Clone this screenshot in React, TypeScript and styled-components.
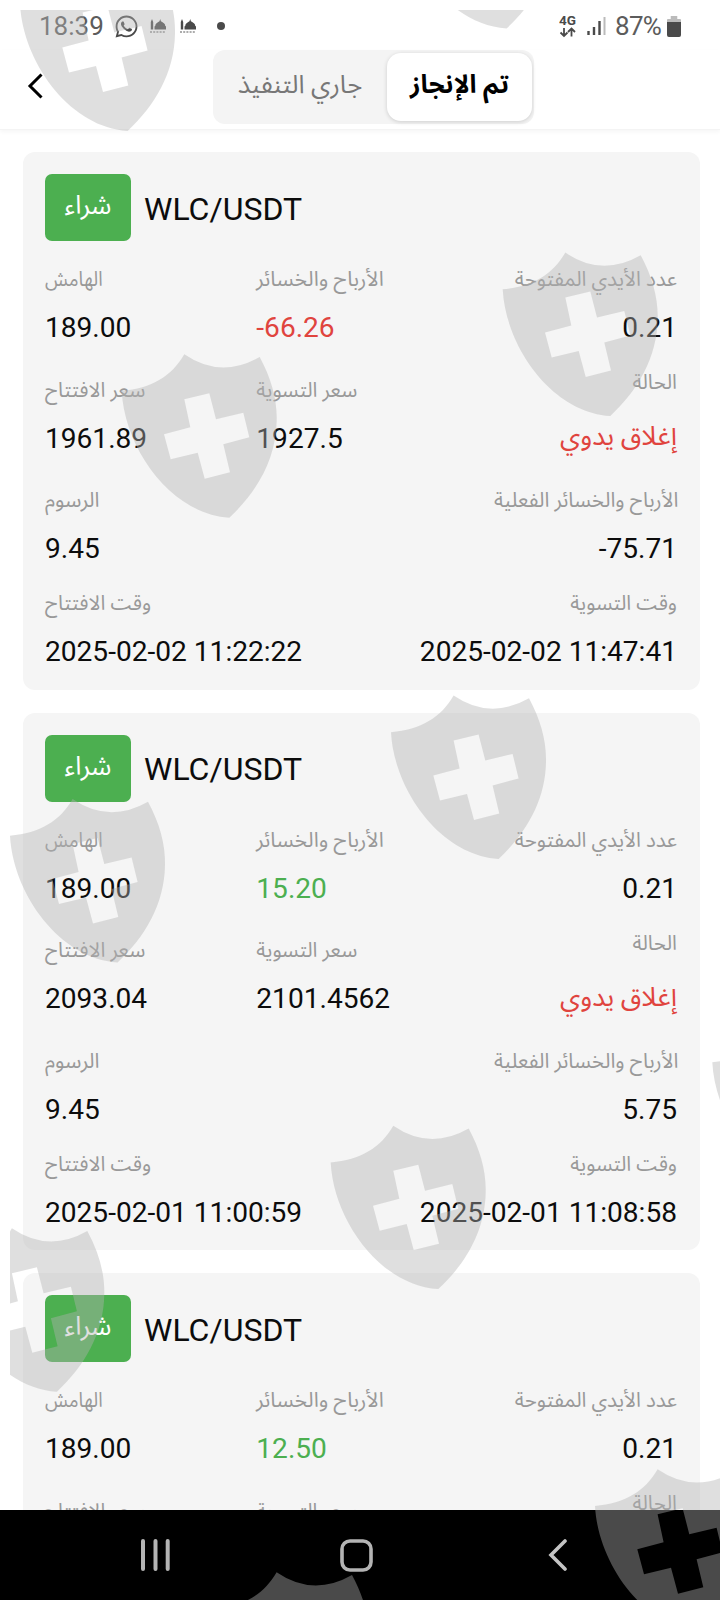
import React from 'react';
import styled, { createGlobalStyle } from 'styled-components';
import { FaWhatsapp } from 'react-icons/fa';

const GlobalStyle = createGlobalStyle`
  * { box-sizing: border-box; }
  body {
    margin: 0;
    background: #fff;
    font-family: Roboto, "Noto Sans Arabic", "Noto Sans", "DejaVu Sans", sans-serif;
    color: #0c0c0c;
  }
`

const Screen = styled.div`
  position: relative;
  width: 720px;
  height: 1600px;
  display: flex;
  flex-direction: column;
  overflow: hidden;
`

const StatusBar = styled.div`
  height: 50px;
  flex: none;
  display: flex;
  justify-content: space-between;
  padding: 2px 39px 0 39px;
  color: #4a4a4a;
  font-size: 26px;
`

const StatusGroup = styled.div`
  display: flex;
  align-items: center;
  height: 48px;
`

const Clock = styled.span`
  width: 75px;
  color: #5c5c5c;
`

const Battery = styled.span`
  width: 48px;
  margin: 0 4px 0 9px;
  color: #5c5c5c;
  letter-spacing: -0.7px;
`

const Dot = styled.span`
  width: 8px;
  height: 8px;
  margin-left: 21px;
  border-radius: 50%;
  background: #4a4a4a;
`

const AppIcon = styled.span<{ $gap: number }>`
  display: flex;
  margin-left: ${props => props.$gap}px;
`

const Header = styled.header`
  height: 80px;
  flex: none;
  display: flex;
  align-items: flex-start;
  border-bottom: 1px solid #f4f4f4;
  box-shadow: 0 2px 4px rgba(0, 0, 0, 0.04);
`

const BackButton = styled.button`
  border: none;
  background: none;
  width: 213px;
  height: 72px;
  padding: 0 0 0 27px;
  display: flex;
  align-items: center;
`

const Tabs = styled.div`
  display: flex;
  align-items: center;
  width: 321px;
  height: 74px;
  border-radius: 12px;
  background: #f4f4f4;
`

const Tab = styled.button<{ $active?: boolean }>`
  border: none;
  flex: none;
  width: ${props => props.$active ? 145 : 174}px;
  height: 68px;
  padding: 0 0 5px;
  border-radius: 14px;
  font-family: inherit;
  font-size: 25.6px;
  font-weight: ${props => props.$active ? 700 : 400};
  color: ${props => props.$active ? '#000' : '#777'};
  background: ${props => props.$active ? '#fff' : 'transparent'};
  box-shadow: ${props => props.$active ? '0 1px 4px rgba(0, 0, 0, 0.16)' : 'none'};
  white-space: nowrap;
`

const List = styled.main`
  flex: 1;
  min-height: 0;
  overflow: hidden;
  display: flex;
  flex-direction: column;
  gap: 23px;
  padding: 22px 20px 0 23px;
`

const Card = styled.section`
  flex: none;
  height: 537.6px;
  padding: 22px 23px 0 22px;
  border-radius: 12px;
  background: #f5f5f5;
`

const CardTitle = styled.div`
  display: flex;
  align-items: center;
  height: 67px;
  margin-bottom: 22px;
`

const Side = styled.span`
  width: 86px;
  height: 67px;
  margin-right: 13px;
  padding-bottom: 4px;
  display: flex;
  align-items: center;
  justify-content: center;
  border-radius: 7px;
  background: #4caf50;
  color: #fff;
  font-size: 26px;
`

const Pair = styled.span`
  padding-top: 2px;
  font-size: 32px;
`

const Row = styled.div<{ $tall?: boolean }>`
  display: flex;
  align-items: center;
  justify-content: space-between;
  height: ${props => props.$tall ? 118 : 103}px;
`

const Field = styled.div<{ $end?: boolean; $tall?: boolean }>`
  flex: 1;
  height: ${props => props.$tall ? 118 : 103}px;
  display: flex;
  flex-direction: column;
  align-items: ${props => props.$end ? 'flex-end' : 'flex-start'};
  white-space: nowrap;

  &:nth-child(2):not(:last-child) {
    padding-left: 1px;
  }
`

const Label = styled.span<{ $stretch?: number }>`
  height: 33px;
  line-height: 33px;
  font-size: 20.5px;
  color: #999;
  transform: scaleX(${props => props.$stretch || 1});
  transform-origin: left;
`

const Value = styled.span<{ $color?: string }>`
  margin-top: 15px;
  height: 34px;
  line-height: 34px;
  font-size: 28.1px;
  color: ${props => props.$color || 'inherit'};
`

const State = styled.span`
  margin-top: 15px;
  height: 44px;
  line-height: 44px;
  font-size: 26.6px;
  color: #e0443e;
`

const NavBar = styled.nav`
  flex: none;
  height: 90px;
  display: flex;
  align-items: center;
  padding-left: 140px;
  background: #000;
`

const NavButton = styled.button<{ $width: number }>`
  border: none;
  background: none;
  padding: 0;
  display: flex;
  width: ${props => props.$width}px;
`

const Overlay = styled.svg`
  position: absolute;
  inset: 0;
  pointer-events: none;
`

type Order = {
  pnl: string;
  open: string;
  close: string;
  net: string;
  openTime: string;
  closeTime: string;
}

const orders: Order[] = [
  { pnl: '-66.26', open: '1961.89', close: '1927.5', net: '-75.71', openTime: '2025-02-02 11:22:22', closeTime: '2025-02-02 11:47:41' },
  { pnl: '15.20', open: '2093.04', close: '2101.4562', net: '5.75', openTime: '2025-02-01 11:00:59', closeTime: '2025-02-01 11:08:58' },
  { pnl: '12.50', open: '', close: '', net: '', openTime: '', closeTime: '' },
]

const shields = [
  [20, -32.5], [399, -135], [502.7, 252.6], [121.7, 354.3], [391, 695.5], [10, 799],
  [330.7, 1125.7], [-50.7, 1228.3], [712.3, 1025.6], [595, 1469.3], [214, 1572.3],
]

const SHIELD = 'M62.6 0Q99 25 138 2.7C149.500 24 155.500 45 155 66C154.500 105 135 138 107.6 163.4C50 160 3 95 0 36.7C30 34 50 22 62.6 0Z'
const CROSS = 'M62.6 45L87.6 39L94.3 65L121.6 58.4L127.6 83L101.6 90L108.3 118L83 124.4L76 98.4L49 105L42.3 80L68.6 73Z'

const Shields = () => (
  <Overlay width="720" height="1600">
    <clipPath id="inner"><rect x="10" y="10" width="710" height="1590" /></clipPath>
    <g clipPath="url(#inner)" fill="#b2b2b2" fillOpacity="0.416" fillRule="evenodd">
      {shields.map(([x, y]) => (
        <path key={`${x}-${y}`} d={SHIELD + CROSS} transform={`translate(${x} ${y})`} />
      ))}
    </g>
  </Overlay>
)

const Mosque = () => (
  <svg width="16" height="15" viewBox="0 0 16 15">
    <path d="M2 0L3.200 3V10.500H.800V3zM10.200 0l.7 2.200c2.300 1.100 4.300 2.500 4.300 4.500l.8.800v3H4.500v-3l.8-.8c0-2 2-3.400 4.200-4.500z" fill="#4a4a4a" />
    <path d="M0 13h16" stroke="#4a4a4a" strokeWidth="1.600" strokeDasharray="2 1.200" opacity="0.6" />
  </svg>
)

const OrderCard = ({ order }: { order: Order }) => (
  <Card>
    <CardTitle>
      <Side>شراء</Side>
      <Pair>WLC/USDT</Pair>
    </CardTitle>
    <Row>
      <Field>
        <Label $stretch={0.91}>الهامش</Label>
        <Value>189.00</Value>
      </Field>
      <Field>
        <Label $stretch={1.04}>الأرباح والخسائر</Label>
        <Value $color={order.pnl.startsWith('-') ? '#e0443e' : '#4caf50'}>{order.pnl}</Value>
      </Field>
      <Field $end>
        <Label>عدد الأيدي المفتوحة</Label>
        <Value>0.21</Value>
      </Field>
    </Row>
    <Row $tall>
      <Field>
        <Label>سعر الافتتاح</Label>
        <Value>{order.open}</Value>
      </Field>
      <Field>
        <Label>سعر التسوية</Label>
        <Value>{order.close}</Value>
      </Field>
      <Field $end $tall>
        <Label>الحالة</Label>
        {order.open && <State>إغلاق يدوي</State>}
      </Field>
    </Row>
    {order.open && (
      <>
        <Row>
          <Field>
            <Label $stretch={1.02}>الرسوم</Label>
            <Value>9.45</Value>
          </Field>
          <Field $end>
            <Label $stretch={1.01}>الأرباح والخسائر الفعلية</Label>
            <Value>{order.net}</Value>
          </Field>
        </Row>
        <Row>
          <Field>
            <Label>وقت الافتتاح</Label>
            <Value>{order.openTime}</Value>
          </Field>
          <Field $end>
            <Label>وقت التسوية</Label>
            <Value>{order.closeTime}</Value>
          </Field>
        </Row>
      </>
    )}
  </Card>
)

const App = () => {
  return (
    <Screen>
      <GlobalStyle />
      <StatusBar>
        <StatusGroup>
          <Clock>18:39</Clock>
          <AppIcon $gap={0}><FaWhatsapp size={25} /></AppIcon>
          <AppIcon $gap={11}><Mosque /></AppIcon>
          <AppIcon $gap={14}><Mosque /></AppIcon>
          <Dot />
        </StatusGroup>
        <StatusGroup>
          <svg width="18" height="24" viewBox="0 0 18 24">
            <text x="0" y="11" fontSize="12.5" fontWeight="700" fill="#4a4a4a" textLength="17" lengthAdjust="spacingAndGlyphs">4G</text>
            <path d="M5 14v8M1.5 18.5L5 22l3.500-3.500M12.500 22.500v-8M9 18l3.500-3.500L16 18" fill="none" stroke="#4a4a4a" strokeWidth="1.800" />
          </svg>
          <svg width="19" height="20" viewBox="0 0 19 20" style={{ marginLeft: 10 }}>
            <path d="M1.500 15v4M7 11v8M12.500 5v14" stroke="#4a4a4a" strokeWidth="2.400" />
            <path d="M17.500 1v18" stroke="#bbb" strokeWidth="2" />
          </svg>
          <Battery>87%</Battery>
          <svg width="14" height="21" viewBox="0 0 15 21" preserveAspectRatio="none">
            <path d="M4 0h7v3h3a1 1 0 0 1 1 1v3H0V4a1 1 0 0 1 1-1h3z" fill="#bbb" />
            <path d="M0 6h15v13a2 2 0 0 1-2 2H2a2 2 0 0 1-2-2z" fill="#4a4a4a" />
          </svg>
        </StatusGroup>
      </StatusBar>
      <Header>
        <BackButton>
          <svg width="17" height="26" viewBox="0 0 17 26">
            <path d="M14.500 1.500L3 13l11.500 11.500" fill="none" stroke="#000" strokeWidth="3" />
          </svg>
        </BackButton>
        <Tabs>
          <Tab>جاري التنفيذ</Tab>
          <Tab $active>تم الإنجاز</Tab>
        </Tabs>
      </Header>
      <List>
        {orders.map(order => <OrderCard key={order.pnl} order={order} />)}
      </List>
      <NavBar>
        <NavButton $width={200}>
          <svg width="31" height="32" viewBox="0 0 31 32">
            <path d="M3 2v28M15.500 2v28M27.700 2v28" stroke="#b4b4b4" strokeWidth="4" strokeLinecap="round" />
          </svg>
        </NavButton>
        <NavButton $width={208}>
          <svg width="33" height="33" viewBox="0 0 33 33">
            <rect x="2" y="2" width="29" height="29" rx="8" fill="none" stroke="#b4b4b4" strokeWidth="3.600" />
          </svg>
        </NavButton>
        <NavButton $width={20}>
          <svg width="20" height="32" viewBox="0 0 20 32">
            <path d="M17 2L3 16l14 14" fill="none" stroke="#c4c4c4" strokeWidth="3.600" strokeLinecap="round" />
          </svg>
        </NavButton>
      </NavBar>
      <Shields />
    </Screen>
  );
};

export default App;
